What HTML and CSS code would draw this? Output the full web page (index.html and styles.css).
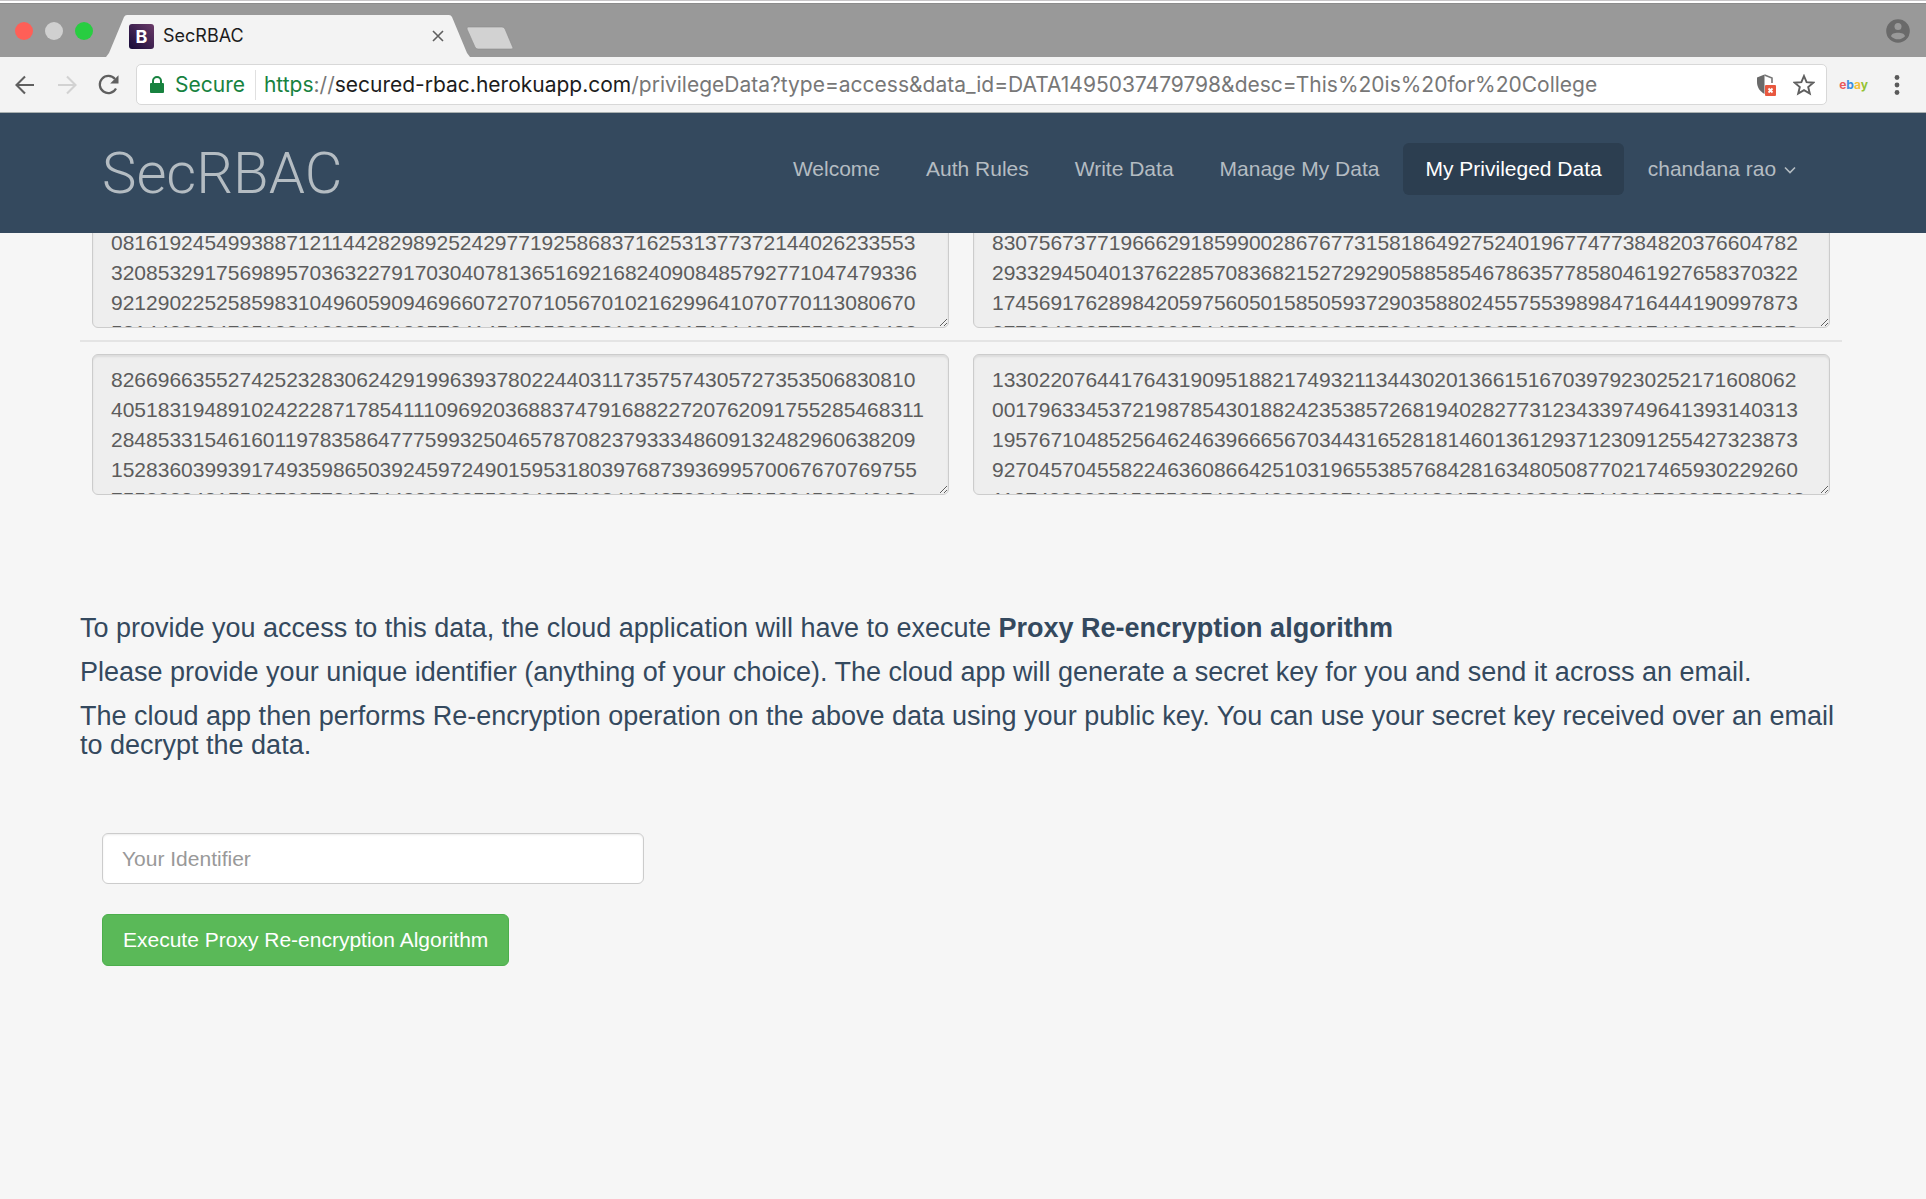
FILE: index.html
```html
<!DOCTYPE html>
<html lang="en">
<head>
<meta charset="utf-8">
<title>SecRBAC</title>
<link rel="stylesheet" href="styles.css">
</head>
<body>
<div class="browser">
  <div class="tabstrip">
    <div class="lights">
      <span class="light light-close"></span>
      <span class="light light-min"></span>
      <span class="light light-max"></span>
    </div>
    <div class="tab">
      <svg class="tab-shape" viewBox="0 0 364 42" preserveAspectRatio="none" aria-hidden="true"><path d="M0 42 3 38 18 2Q19 0 21 0H343Q345 0 346 2L361 38 364 42Z" fill="#f3f3f3"/></svg>
      <span class="favicon">B</span>
      <span class="tab-title">SecRBAC</span>
      <button class="tab-close" aria-label="Close tab"><svg width="12" height="12" viewBox="0 0 12 12"><path d="M1 1 11 11M11 1 1 11" stroke="#5f5f5f" stroke-width="1.6"/></svg></button>
    </div>
    <svg class="newtab" width="50" height="24" viewBox="0 0 50 24" aria-hidden="true"><path d="M3 1H37Q39 1 40 3L48 22Q48 23 46 23H13Q11 23 10 21L2 3Q2 1 3 1Z" fill="#d2d2d2" stroke="#8c8c8c" stroke-width=".6"/></svg>
    <svg class="avatar" width="24" height="24" viewBox="0 0 24 24" aria-hidden="true"><circle cx="12" cy="12" r="11.8" fill="#6a6a6a"/><circle cx="12" cy="7.6" r="3.5" fill="#999"/><path d="M5 17.2C5.600 12.600 18.400 12.600 19 17.200 15.500 21.300 8.500 21.300 5 17.200Z" fill="#999"/></svg>
  </div>
  <div class="toolbar">
    <div class="tools">
      <button aria-label="Back"><svg width="22" height="22" viewBox="0 0 22 22"><path d="M20 11H3M11 2.500 2.500 11 11 19.500" fill="none" stroke="#5f5f5f" stroke-width="2.100"/></svg></button>
      <button aria-label="Forward"><svg width="22" height="22" viewBox="0 0 22 22"><path d="M2 11H19M11 2.500 19.500 11 11 19.500" fill="none" stroke="#d2d2d2" stroke-width="2.100"/></svg></button>
      <button aria-label="Reload"><svg width="22" height="22" viewBox="0 0 22 22"><path d="M18 14.500A8.600 8.600 0 1 1 17 5" fill="none" stroke="#5f5f5f" stroke-width="2.200"/><path d="M20.500 1.200V9.500H12.200Z" fill="#5f5f5f"/></svg></button>
    </div>
    <div class="omnibox">
      <svg width="14" height="18" viewBox="0 0 14 18" aria-hidden="true"><rect y="7" width="14" height="10" rx="1" fill="#17823f"/><path d="M3 8V5A4 4 0 0 1 11 5V8" fill="none" stroke="#17823f" stroke-width="2"/></svg>
      <span class="secure">Secure</span>
      <span class="url"><span class="scheme">https</span>://<span class="host">secured-rbac.herokuapp.com</span>/privilegeData?type=access&amp;data_id=DATA1495037479798&amp;desc=This%20is%20for%20College</span>
      <svg width="20" height="24" viewBox="0 0 20 24" aria-hidden="true"><path d="M8.500 1.500V21C4 18.500 1 14.500 1 9V4.500Z" fill="#6a6a6a"/><path d="M8.500 2 16 5V10" fill="none" stroke="#777" stroke-width="1.600"/><rect x="9" y="12" width="11" height="11" rx="1" fill="#e8583f"/><path d="M12.500 15.500 16.500 19.500M16.500 15.500 12.500 19.500" stroke="#fff" stroke-width="1.800"/></svg>
      <svg class="star" width="22" height="22" viewBox="0 0 22 22" aria-hidden="true"><path d="M11 2 13.600 8.200 20.300 8.700 15.200 13 16.800 19.600 11 16.100 5.200 19.600 6.800 13 1.700 8.700 8.400 8.200Z" fill="none" stroke="#5f5f5f" stroke-width="1.900"/></svg>
    </div>
    <span class="ebay"><b class="e-red">e</b><b class="e-blue">b</b><b class="e-yellow">a</b><b class="e-green">y</b></span>
    <svg class="dots" width="6" height="22" viewBox="0 0 6 22" aria-hidden="true"><g fill="#5a5a5a"><circle cx="3" cy="3.500" r="2.400"/><circle cx="3" cy="11" r="2.400"/><circle cx="3" cy="18.500" r="2.400"/></g></svg>
  </div>
</div>
<header class="navbar">
  <a class="brand" href="#">SecRBAC</a>
  <nav class="menu">
    <a href="#">Welcome</a>
    <a href="#">Auth Rules</a>
    <a href="#">Write Data</a>
    <a href="#">Manage My Data</a>
    <a class="active" href="#">My Privileged Data</a>
    <a href="#">chandana rao <svg class="caret" width="12" height="8" viewBox="0 0 12 8" aria-hidden="true"><path d="M1 1.500 6 6.500 11 1.500" fill="none" stroke="#b4bcc2" stroke-width="1.600"/></svg></a>
  </nav>
</header>
<main class="content">
  <div class="rows">
    <div class="row">
      <textarea aria-label="Encrypted data, part 1" disabled>
517294038825610473965182740396615082937441058263719504826317
081619245499388712114428298925242977192586837162531377372144026233553
320853291756989570363227917030407813651692168240908485792771047479336
921290225258598310496059094696607270710567010216299641070770113080670
581448823472518341898785189578414547258885318838617181408775538383488</textarea>
      <textarea aria-label="Encrypted data, part 2" disabled>
604813925770148263950174826395018263740915826370491582637049
830756737719666291859900286767731581864927524019677477384820376604782
293329450401376228570836821527292905885854678635778580461927658370322
174569176289842059756050158505937290358802455755398984716444190997873
877884888577888335448788258883253793188428967838333332817418888887878</textarea>
    </div>
    <div class="row">
      <textarea aria-label="Encrypted data, part 3" disabled>
826696635527425232830624291996393780224403117357574305727353506830810
4051831948910242228717854111096920368837479168822720762091755285468311
284853315461601197835864777599325046578708237933348609132482960638209
152836039939174935986503924597249015953180397687393699570067670769755
755838848155487887781854488888855883485748841848788184715834588848188</textarea>
      <textarea aria-label="Encrypted data, part 4" disabled>
133022076441764319095188217493211344302013661516703979230252171608062
001796334537219878543018824235385726819402827731234339749641393140313
195767104852564624639666567034431652818146013612937123091255427323873
927045704558224636086642510319655385768428163480508770217465930229260
1187488888515855887488848888887118841188178881888847448817888858888848</textarea>
    </div>
  </div>
  <section class="notes">
    <p>To provide you access to this data, the cloud application will have to execute <strong>Proxy Re-encryption algorithm</strong></p>
    <p>Please provide your unique identifier (anything of your choice). The cloud app will generate a secret key for you and send it across an email.</p>
    <p>The cloud app then performs Re-encryption operation on the above data using your public key. You can use your secret key received over an email to decrypt the data.</p>
  </section>
  <form class="form">
    <input type="text" aria-label="Your Identifier" placeholder="Your Identifier">
    <button type="button" class="execute">Execute Proxy Re-encryption Algorithm</button>
  </form>
</main>
</body>
</html>
```
FILE: styles.css
```css
* { box-sizing: border-box; }

body {
  margin: 0;
  min-height: 100vh;
  background: #f6f6f6;
  color: #34495e;
  font-family: "Liberation Sans", Arial, sans-serif;
  font-size: 21px;
  line-height: 30px;
}

button { border: 0; padding: 0; background: none; font: inherit; }
a { color: inherit; text-decoration: none; }
svg { display: block; flex: none; }

/* Browser frame */
.browser {
  border-top: 1px solid #c8c6c8;
  padding-top: 2px;
  background: #fff;
  font-family: Inter, Roboto, sans-serif;
}

.tabstrip {
  display: flex;
  align-items: center;
  height: 54px;
  padding: 0 16px 0 15px;
  background: #999;
  border-top: 1px solid #8c8c8c;
}

.lights { display: flex; gap: 12px; width: 91px; }
.light { width: 18px; height: 18px; border-radius: 50%; }
.light-close { background: #ff5f57; }
.light-min { background: #d0d0d0; }
.light-max { background: #28cd41; }

.tab {
  position: relative;
  display: flex;
  align-items: center;
  align-self: flex-end;
  width: 364px;
  height: 42px;
  padding: 0 26px 0 23px;
}
.tab-shape { position: absolute; inset: 0; width: 100%; height: 100%; }
.favicon {
  position: relative;
  width: 25px;
  height: 25px;
  margin-right: 9px;
  border-radius: 3px;
  background: linear-gradient(225deg, #6a3a68, #150a38);
  color: #fff;
  font-size: 18px;
  font-weight: 700;
  line-height: 25px;
  text-align: center;
}
.tab-title { position: relative; flex: 1; color: #1c1c1c; font-size: 18px; }
.tab-close { position: relative; }
.newtab { align-self: flex-end; margin: 0 0 7px -5px; }
.avatar { margin-left: auto; }

.toolbar {
  display: flex;
  align-items: center;
  height: 56px;
  padding: 0 26px 0 14px;
  background: #f3f3f3;
  border-bottom: 1px solid #a9b0b0;
}
.tools { display: flex; gap: 20px; margin-right: 16px; }
.omnibox {
  display: flex;
  flex: 1;
  align-items: center;
  height: 41px;
  padding: 0 11px 0 13px;
  background: #fff;
  border: 1px solid #d8d8d8;
  border-radius: 5px;
}
.secure {
  margin: 0 8px 0 11px;
  padding-right: 10px;
  border-right: 1px solid #e0e0e0;
  color: #17823f;
}
.url { flex: 1; color: #777; white-space: nowrap; }
.scheme { color: #17823f; }
.host { color: #1c1c1c; }
.star { margin-left: 17px; }
.ebay { margin-left: 12px; font-size: 12px; line-height: 22px; }
.e-red { color: #ea5a5e; }
.e-blue { color: #3f8fdf; }
.e-yellow { color: #f3bf3c; }
.e-green { color: #94c234; }
.dots { margin-left: 26px; }

/* Site header */
.navbar {
  position: relative;
  z-index: 1;
  display: flex;
  align-items: center;
  justify-content: space-between;
  height: 120px;
  padding: 0 108px 0 102px;
  background: #34495e;
  color: #b4bcc2;
}
.brand {
  font-family: Roboto, sans-serif;
  font-size: 58px;
  font-weight: 300;
  line-height: 64px;
}
.menu { display: flex; gap: 2px; margin-bottom: 8px; }
.menu a { padding: 11px 22px; border-radius: 6px; }
.menu .active { background: #2c3e50; color: #fff; }
.caret { display: inline-block; margin-left: 2px; vertical-align: middle; }

/* Page */
.content { padding: 0 84px 0 80px; }
.rows { margin-top: -58px; }
.row {
  display: grid;
  grid-template-columns: 1fr 1fr;
  gap: 24px;
  padding: 12px;
}
.row + .row { border-top: 2px solid #e4e4e4; }

textarea {
  display: block;
  width: 100%;
  height: 141px;
  padding: 10px 18px;
  overflow: hidden;
  resize: both;
  background: #eee;
  border: 1px solid #ccc;
  border-radius: 6px;
  box-shadow: inset 0 2px 2px rgba(0, 0, 0, .08);
  color: #5c5c5c;
  font: inherit;
  white-space: pre;
}

.notes { margin-top: 107px; font-size: 27px; line-height: 29px; }
.notes p { margin: 0 0 15px; }

.form {
  display: flex;
  flex-direction: column;
  align-items: flex-start;
  gap: 30px;
  margin-top: 73px;
  padding-left: 22px;
}
.form input {
  width: 542px;
  max-width: 100%;
  height: 51px;
  padding: 9px 19px;
  background: #fff;
  border: 1px solid #ccc;
  border-radius: 6px;
  box-shadow: inset 0 1px 2px rgba(0, 0, 0, .08);
  font: inherit;
}
.form input::placeholder { color: #999; }
.execute {
  padding: 10px 20px;
  border: 1px solid #4cae4c;
  border-radius: 6px;
  background: #5ab958;
  color: #fff;
}
```
